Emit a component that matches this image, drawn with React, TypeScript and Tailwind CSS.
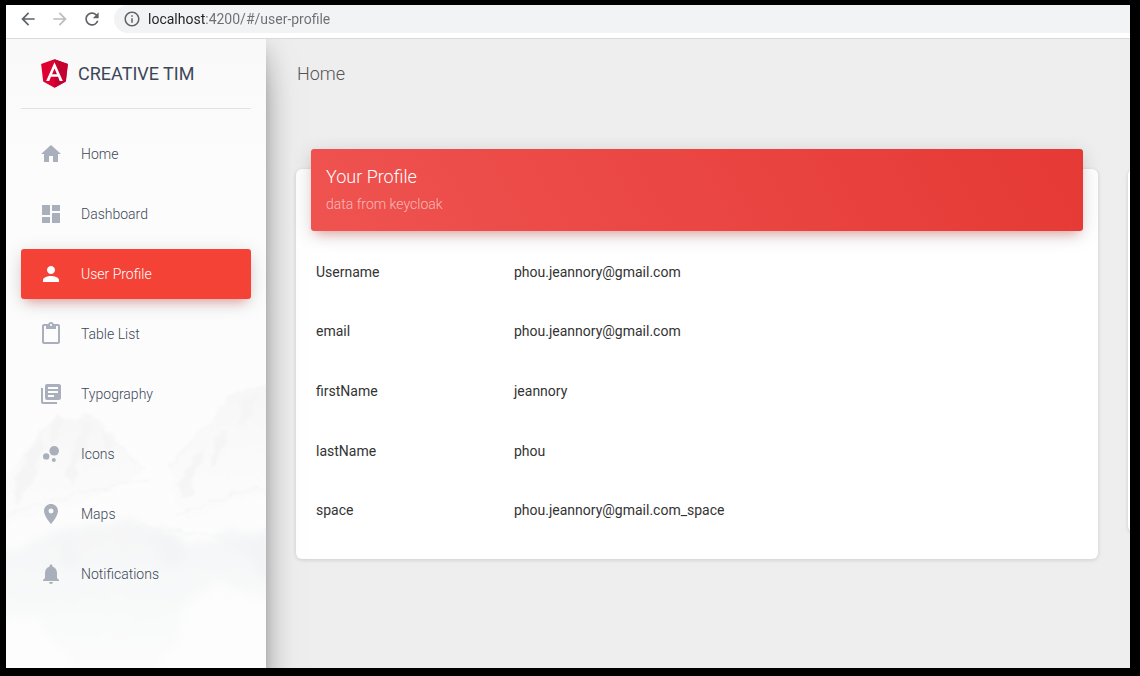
import type { ComponentType } from "react";
import {
  MdArrowBack,
  MdArrowForward,
  MdBubbleChart,
  MdContentPaste,
  MdDashboard,
  MdHome,
  MdInfoOutline,
  MdLibraryBooks,
  MdLocationOn,
  MdNotifications,
  MdPerson,
  MdRefresh,
} from "react-icons/md";

type NavItem = {
  label: string;
  href: string;
  icon: ComponentType<{ className?: string }>;
  active?: boolean;
};

const navItems: NavItem[] = [
  { label: "Home", href: "#/home", icon: MdHome },
  { label: "Dashboard", href: "#/dashboard", icon: MdDashboard },
  { label: "User Profile", href: "#/user-profile", icon: MdPerson, active: true },
  { label: "Table List", href: "#/table-list", icon: MdContentPaste },
  { label: "Typography", href: "#/typography", icon: MdLibraryBooks },
  { label: "Icons", href: "#/icons", icon: MdBubbleChart },
  { label: "Maps", href: "#/maps", icon: MdLocationOn },
  { label: "Notifications", href: "#/notifications", icon: MdNotifications },
];

const profile = [
  ["Username", "phou.jeannory@gmail.com"],
  ["email", "phou.jeannory@gmail.com"],
  ["firstName", "jeannory"],
  ["lastName", "phou"],
  ["space", "phou.jeannory@gmail.com_space"],
];

function BrowserBar() {
  return (
    <header className="flex items-start border-b border-[#d9dadc] bg-white pb-[5px] pl-1.5">
      <button type="button" aria-label="Back" className="flex h-7 w-8 items-center justify-center text-[#5f6368]">
        <MdArrowBack className="size-5" />
      </button>
      <button type="button" aria-label="Forward" className="flex h-7 w-8 items-center justify-center text-[#babcbe]">
        <MdArrowForward className="size-5" />
      </button>
      <button type="button" aria-label="Reload" className="flex h-7 w-8 items-center justify-center text-[#5f6368]">
        <MdRefresh className="size-5" />
      </button>
      <div className="ml-1.5 flex h-7 flex-1 items-center gap-[7px] rounded-l-full bg-[#f1f3f4] pl-[9px]">
        <MdInfoOutline className="size-[18px] text-[#5f6368]" />
        <input
          aria-label="Address"
          defaultValue="localhost:4200/#/user-profile"
          className="h-7 min-w-0 flex-1 bg-[linear-gradient(90deg,#202124_57px,#6b6f74_57px)] bg-clip-text font-[Roboto,sans-serif] text-sm text-transparent caret-black outline-none"
        />
      </div>
    </header>
  );
}

function AngularLogo() {
  return (
    <svg viewBox="31 29 188 202" className="h-[29px] w-[27px]" aria-hidden="true">
      <path fill="#dd0031" d="M125 30 31.9 63.2l14.2 123.1L125 230l78.9-43.7 14.2-123.1z" />
      <path fill="#c3002f" d="M125 30v200l78.9-43.7 14.2-123.1z" />
      <path
        fill="#fff"
        d="M125 52.1 66.8 182.6h21.7l11.7-29.2h49.4l11.7 29.2H183zM142 135.4h-34l17-40.9z"
      />
    </svg>
  );
}

function Mountains() {
  return (
    <svg
      viewBox="0 0 260 661"
      preserveAspectRatio="xMidYMax slice"
      className="absolute inset-0 size-full"
      aria-hidden="true"
    >
      <defs>
        <linearGradient id="sky" x1="0" y1="0" x2="0" y2="1">
          <stop offset="0" stopColor="#f9f9f9" />
          <stop offset="0.2" stopColor="#fcfcfc" />
          <stop offset="1" stopColor="#fdfdfd" />
        </linearGradient>
        <linearGradient id="ridge" x1="0" y1="0" x2="0" y2="1">
          <stop offset="0" stopColor="#f7f7f7" />
          <stop offset="1" stopColor="#fcfcfc" />
        </linearGradient>
        <linearGradient id="valley" x1="0" y1="0" x2="0" y2="1">
          <stop offset="0" stopColor="#f5f6f7" />
          <stop offset="0.5" stopColor="#f8f9f9" />
          <stop offset="1" stopColor="#fcfcfc" />
        </linearGradient>
        <filter id="rough" x="-10%" y="-10%" width="120%" height="120%">
          <feTurbulence type="fractalNoise" baseFrequency="0.09" numOctaves="5" seed="7" result="n" />
          <feDisplacementMap in="SourceGraphic" in2="n" scale="10" xChannelSelector="R" yChannelSelector="G" />
          <feGaussianBlur stdDeviation="0.8" />
        </filter>
        <filter id="mist" x="-10%" y="-10%" width="120%" height="120%">
          <feTurbulence type="fractalNoise" baseFrequency="0.04" numOctaves="5" seed="3" result="n" />
          <feDisplacementMap in="SourceGraphic" in2="n" scale="30" xChannelSelector="R" yChannelSelector="G" />
          <feGaussianBlur stdDeviation="4" />
        </filter>
      </defs>
      <rect width="260" height="661" fill="url(#sky)" />
      <g filter="url(#rough)">
        <path
          fill="url(#ridge)"
          d="M-8 450 20 414 32 392 52 376 64 382 80 374 96 384 110 402 130 422 142 430 110 448 60 470 20 480-8 490z"
        />
        <path
          fill="url(#ridge)"
          d="M164 426 184 400 206 380 224 356 244 348 272 346v116l-30-4-30 10-24 18-14-10-8-22z"
        />
        <path
          fill="#f5f5f5"
          d="M22 416 34 398 38 408 30 426 28 444 18 452 8 466 10 440zM46 384 56 378 54 396 44 408zM76 382 86 386 82 406 74 420 66 446 60 436 68 412zM96 392 108 406 100 414zM186 420 198 408 196 424 184 440 190 454 176 460 172 444zM210 398 222 392 216 414 204 430zM236 360 250 356 244 378 234 388z"
        />
        <path
          fill="none"
          stroke="#f5f5f5"
          strokeWidth="1.5"
          d="M-4 478Q50 458 90 450T142 440M170 476Q200 466 226 456T268 452M80 490Q140 486 190 494T266 490M112 404 132 424M164 430 186 400"
        />
      </g>
      <g filter="url(#mist)">
        <path
          fill="url(#valley)"
          d="M-10 520 30 500 80 488 130 486 160 488 190 508 226 492 270 490v70l-60-14-30 22-20 56-40 20-50-6-40-56-50-10z"
        />
        <path
          fill="#f2f4f5"
          d="M50 506 64 498 72 516 60 530zM140 492 160 494 182 514 170 524 146 512zM226 500 270 498v44l-22-16z"
        />
      </g>
    </svg>
  );
}

function Sidebar() {
  return (
    <aside className="relative z-10 -mb-8 w-[260px] shrink-0 bg-white shadow-[0_16px_38px_-12px_rgba(0,0,0,0.56),0_4px_25px_0_rgba(0,0,0,0.12),0_8px_10px_-5px_rgba(0,0,0,0.2)]">
      <Mountains />
      <div className="relative px-[15px]">
        <a
          href="#/"
          className="flex h-[70px] items-center gap-2.5 border-b border-[#e2e2e2] pl-5 text-lg text-[#3c4858]"
        >
          <AngularLogo />
          CREATIVE TIM
        </a>
        <nav className="mt-5">
          <ul className="flex flex-col gap-2.5">
            {navItems.map(({ label, href, icon: Icon, active }) => (
              <li key={label}>
                <a
                  href={href}
                  aria-current={active ? "page" : undefined}
                  className={
                    active
                      ? "flex h-[50px] items-center gap-[18px] rounded-[3px] bg-[#f44336] pl-[18px] text-sm font-light text-white shadow-[0_4px_20px_0_rgba(0,0,0,0.14),0_7px_10px_-5px_rgba(244,67,54,0.4)]"
                      : "flex h-[50px] items-center gap-[18px] rounded-[3px] pl-[18px] text-sm font-light text-[#3c4858]"
                  }
                >
                  <Icon className={active ? "size-6 text-white" : "size-6 text-[#a9afbb]"} />
                  {label}
                </a>
              </li>
            ))}
          </ul>
        </nav>
      </div>
    </aside>
  );
}

function ProfileCard() {
  return (
    <section className="w-[calc(100%-32px)] shrink-0 rounded-md bg-white px-[15px] pb-[19px] shadow-[0_1px_4px_0_rgba(0,0,0,0.14)]">
      <div className="-mt-5 rounded-[3px] bg-[linear-gradient(60deg,#ef5350,#e53935)] px-[15px] pt-[15px] pb-4 text-white shadow-[0_4px_20px_0_rgba(0,0,0,0.14),0_7px_10px_-5px_rgba(244,67,54,0.4)]">
        <h2 className="text-lg leading-[26px] font-light">Your Profile</h2>
        <p className="mt-[3px] text-sm leading-[22px] font-light text-white/60">data from keycloak</p>
      </div>
      <table className="mt-[11px] h-[298px] w-full text-left text-sm text-[#333333]">
        <tbody>
          {profile.map(([name, value]) => (
            <tr key={name}>
              <th scope="row" className="w-[203px] pl-[5px] font-normal">
                {name}
              </th>
              <td>{value}</td>
            </tr>
          ))}
        </tbody>
      </table>
    </section>
  );
}

export default function App() {
  return (
    <div className="flex min-h-screen flex-col bg-black pt-[5px] pr-2.5 pb-2 pl-1.5 font-[Roboto,sans-serif]">
      <BrowserBar />
      <div className="flex flex-1 overflow-hidden bg-[#eeeeee]">
        <Sidebar />
        <main className="min-w-0 flex-1 overflow-hidden pl-[30px]">
          <h1 className="flex h-[70px] items-center text-lg font-light text-[#555555]">
            <a href="#/home" className="pl-px">
              Home
            </a>
          </h1>
          <div className="-ml-[30px] flex items-start gap-[30px] overflow-hidden pt-[60px] pb-10 pl-[30px]">
            <ProfileCard />
            <section className="h-[363px] w-96 shrink-0 rounded-md bg-white shadow-[0_1px_4px_0_rgba(0,0,0,0.14)]" />
          </div>
        </main>
      </div>
    </div>
  );
}
